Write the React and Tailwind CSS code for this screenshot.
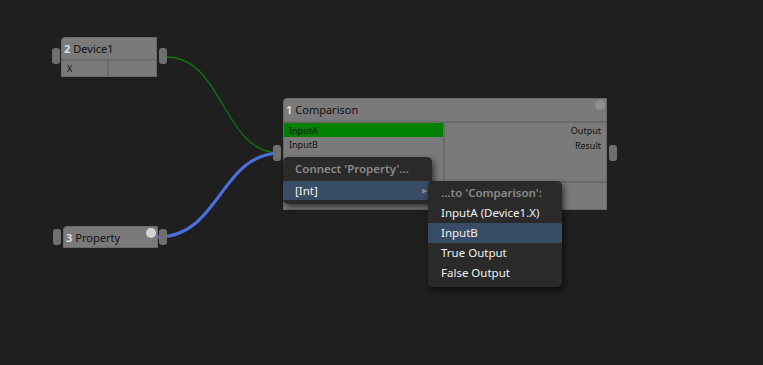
import React from "react";

function Socket({ className }) {
  return <div className={"absolute w-[8px] h-[16px] rounded-[3px] bg-[#6f6f6f] " + className} />;
}

export default function App() {
  return (
    <div className="relative w-[763px] h-[365px] bg-[#1f1f1f] overflow-hidden font-['Noto_Sans',sans-serif] text-[#111]">
      <svg className="absolute inset-0" width="763" height="365">
        <path d="M166,57 C224,57 222,153 280,153" stroke="#0a7a0a" strokeWidth="1.3" fill="none" />
        <path d="M158,237 C220,237 220,153 281,153" stroke="#4a6fe0" strokeWidth="3" fill="none" />
      </svg>

      {/* Device1 node */}
      <Socket className="left-[52px] top-[48px]" />
      <Socket className="left-[159px] top-[48px]" />
      <div className="absolute left-[61px] top-[37px] w-[96px] h-[40px] bg-[#7a7a7a] border border-[#6a6a6a] rounded-tl-[4px] flex flex-col">
        <div className="h-[23px] flex items-center px-[2px] text-[11px] leading-none border-b-2 border-[#6a6a6a]">
          <span className="font-bold text-[#dcdcdc] mr-[3px]">2</span>
          <span>Device1</span>
        </div>
        <div className="flex flex-1">
          <div className="w-[47px] border-r-2 border-[#6a6a6a] text-[9px] leading-none px-[5px] flex items-center">X</div>
          <div className="flex-1" />
        </div>
      </div>

      {/* Property node */}
      <Socket className="left-[53px] top-[229px]" />
      <Socket className="left-[159px] top-[229px]" />
      <div className="absolute left-[63px] top-[226px] w-[95px] h-[22px] bg-[#7a7a7a] border border-[#6a6a6a] rounded-tl-[4px] flex items-center px-[2px] text-[11px] leading-none">
        <span className="font-bold text-[#dcdcdc] mr-[3px]">3</span>
        <span>Property</span>
        <div className="absolute right-[1px] top-[1px] w-[10px] h-[10px] rounded-full bg-[#d4d4d4]" />
      </div>

      {/* Comparison node */}
      <Socket className="left-[273px] top-[145px]" />
      <Socket className="left-[609px] top-[145px]" />
      <div className="absolute left-[283px] top-[98px] w-[324px] h-[112px] bg-[#7a7a7a] border border-[#6a6a6a] rounded-tl-[4px] flex flex-col">
        <div className="relative h-[24px] flex items-center px-[2px] pb-[2px] text-[11px] leading-none border-b-2 border-[#6a6a6a]">
          <span className="font-bold text-[#dcdcdc] mr-[3px]">1</span>
          <span>Comparison</span>
          <div className="absolute right-[1px] top-[1px] w-[10px] h-[10px] rounded-full bg-[#8e8e8e]" />
        </div>
        <div className="flex flex-1">
          <div className="w-[161px] border-r-2 border-[#6a6a6a] flex flex-col text-[9px] leading-none">
            <div className="h-[14px] bg-[#008000] flex items-center px-[5px]">InputA</div>
            <div className="h-[14px] flex items-center px-[5px]">InputB</div>
          </div>
          <div className="flex-1 flex flex-col">
            <div className="h-[60px] border-b-2 border-[#6a6a6a] flex flex-col items-end pr-[5px] text-[9px] leading-none">
              <div className="h-[15px] flex items-center">Output</div>
              <div className="h-[15px] flex items-center">Result</div>
            </div>
            <div className="flex-1" />
          </div>
        </div>
      </div>

      {/* Menu 1 */}
      <div className="absolute left-[283px] top-[157px] w-[149px] h-[47px] bg-[#2a2a2a] rounded-[5px] shadow-[2px_3px_6px_rgba(0,0,0,0.6)] flex flex-col text-[11.5px] leading-none">
        <div className="h-[24px] flex items-center pl-[12px] font-semibold text-[#8a8a8a]">Connect 'Property'...</div>
        <div className="h-[19px] mr-[3px] bg-[#384c65] flex items-center pl-[12px] text-[#f0f0f0] relative">
          [Int]
          <span className="absolute right-[2px] text-[7px] text-[#8a8a8a]">▶</span>
        </div>
      </div>

      {/* Menu 2 */}
      <div className="absolute left-[428px] top-[181px] w-[134px] h-[106px] bg-[#2a2a2a] rounded-[5px] shadow-[2px_3px_6px_rgba(0,0,0,0.6)] flex flex-col text-[11.5px] leading-none text-[#f0f0f0]">
        <div className="h-[22px] flex items-center pl-[13px] font-semibold text-[#8a8a8a] pt-[1px]">...to 'Comparison':</div>
        <div className="h-[20px] flex items-center pl-[13px]">InputA (Device1.X)</div>
        <div className="h-[20px] flex items-center pl-[13px] bg-[#384c65]">InputB</div>
        <div className="h-[20px] flex items-center pl-[13px]">True Output</div>
        <div className="h-[20px] flex items-center pl-[13px]">False Output</div>
      </div>
    </div>
  );
}
